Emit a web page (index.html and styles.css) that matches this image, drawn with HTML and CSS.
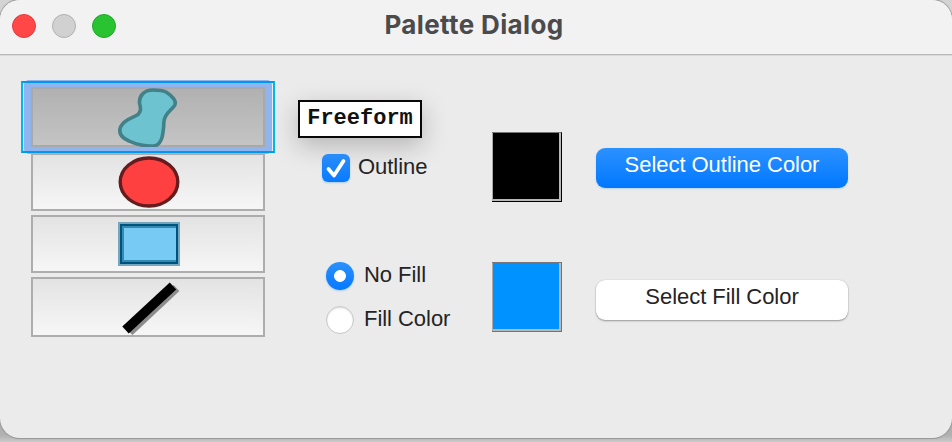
FILE: index.html
```html
<!DOCTYPE html>
<html lang="en">
<head>
<meta charset="utf-8">
<title>Palette Dialog</title>
<link rel="stylesheet" href="styles.css">
</head>
<body>
<main class="window">
  <header class="titlebar">
    <div class="lights"><span class="light close"></span><span class="light minimize"></span><span class="light zoom"></span></div>
    <h1 class="title">Palette Dialog</h1>
  </header>
  <section class="content">
    <div class="tools">
      <button class="tool selected" aria-label="Freeform">
        <svg width="62" height="60" viewBox="118 87 62 60"><path d="M153 90C144 90 139 96 139.500 103C141 109 141 111 138 114.500C133 118 124 119 120.500 127C118 134 122 138 129 141C136 144.500 149 147.500 156 145.500C163 142 163 132 163.800 125C163 116 169 112 173 107.500C179 102 172 96 166 92C162 90 157 90 153 90Z" fill="#6dc3d0" stroke="#438189" stroke-width="3.600"/></svg>
      </button>
      <button class="tool" aria-label="Ellipse">
        <svg width="62" height="54" viewBox="118 155 62 54"><ellipse cx="149" cy="182" rx="28.800" ry="24" fill="#ff4040" stroke="#651c1e" stroke-width="3.400"/></svg>
      </button>
      <button class="tool" aria-label="Rectangle">
        <svg width="62" height="54" viewBox="118 217 62 54"><path d="M118 222h62v44h-62z" fill="#76a6be"/><path d="M120 224h58v40h-58z" fill="#00537e"/><path d="M122 226h54v36h-54z" fill="#3289b2"/><path d="M124 228h52v32h-52z" fill="#77caf4"/></svg>
      </button>
      <button class="tool last" aria-label="Line">
        <svg width="62" height="56" viewBox="118 279 62 56"><path d="M129.500 332L176.500 288" stroke="#8c8c8c" stroke-width="8.500"/><path d="M125.500 330L173 286" stroke="#000" stroke-width="9.500"/></svg>
      </button>
    </div>
    <div class="options">
      <div class="tooltip">Freeform</div>
      <label class="option outline"><span class="check"><svg width="28" height="28" viewBox="0 0 28 28"><path d="M6.500 15L12 21.500L21.500 7" fill="none" stroke="#fff" stroke-width="3.700" stroke-linecap="round" stroke-linejoin="round"/></svg></span><span class="outline-text">Outline</span></label>
      <div class="radios">
        <label class="option"><span class="radio checked"></span><span class="nofill-text">No Fill</span></label>
        <label class="option"><span class="radio"></span><span class="fill-text">Fill Color</span></label>
      </div>
    </div>
    <div class="swatches"><div class="swatch black"></div><div class="swatch blue"></div></div>
    <div class="actions">
      <button class="action primary"><span class="select-outline">Select Outline Color</span></button>
      <button class="action secondary"><span class="select-fill">Select Fill Color</span></button>
    </div>
  </section>
</main>
</body>
</html>
```
FILE: styles.css
```css
* { box-sizing: border-box; }
body {
  margin: 0;
  height: 442px;
  overflow: hidden;
  background: linear-gradient(#d4d4d4, #b0b0b0 435px, #cacaca);
  font-family: "Liberation Sans", Arial, sans-serif;
  font-size: 22px;
  letter-spacing: -.04px;
  color: #242424;
}
.window {
  width: 952px;
  height: 438px;
  border-radius: 20px;
  overflow: hidden;
  background: #ebebeb;
  box-shadow: 0 0 1px 1px #969696;
}
.titlebar {
  height: 56px;
  display: grid;
  grid-template-columns: 1fr auto 1fr;
  background: #f3f2f2;
  border-bottom: 1px solid #dadada;
  box-shadow: inset 0 -1px #b9b9b9;
}
.lights { display: flex; gap: 16px; padding: 14px 0 0 12px; }
.light { width: 24px; height: 24px; border-radius: 50%; border: 1px solid; }
.close { background: #ff4747; border-color: #e33b40; }
.minimize { background: #d1d1d1; border-color: #b0b0b0; }
.zoom { background: #29c231; border-color: #22a82b; }
.title {
  margin: 9px 4px 0 0;
  font: 700 26px/32px Inter, sans-serif;
  letter-spacing: .37px;
  color: #4b4b4b;
  white-space: nowrap;
}
.content { display: flex; height: 382px; }
button { margin: 0; padding: 0; font: inherit; letter-spacing: inherit; }
.tools {
  width: 234px;
  margin: 31px 0 0 31px;
  display: flex;
  flex-direction: column;
  gap: 4px;
}
.tool {
  display: flex;
  justify-content: center;
  align-items: center;
  flex: none;
  height: 58px;
  padding-left: 2px;
  border: 2px solid #adadad;
  background: linear-gradient(#e3e3e3, #f6f6f6);
  position: relative;
}
.tool svg { display: block; flex: none; }
.selected {
  height: 60px;
  margin-bottom: 2px;
  border-color: #a9a9a9;
  background: linear-gradient(#b1b1b1, #c4c4c4);
  z-index: 1;
}
.selected::before {
  content: "";
  position: absolute;
  inset: -9px;
  border: 7px solid #8fb4ee;
  border-radius: 5px;
}
.selected::after {
  content: "";
  position: absolute;
  inset: -8px -12px;
  border: 2px solid #00b7ea;
  border-top-color: #0099ee;
  border-bottom-color: #0099ee;
}
.last { height: 60px; }
.options { width: 170px; margin-left: 33px; padding-top: 44px; }
.tooltip {
  width: 124px;
  height: 38px;
  border: 2px solid #080808;
  background: #fff;
  box-shadow: 0 8px 26px rgba(0, 0, 0, .23);
  color: #111;
  text-align: center;
  font: 700 22px/34px "Liberation Mono", monospace;
  letter-spacing: 0;
}
.option { display: flex; align-items: center; white-space: nowrap; line-height: 28px; }
.outline { margin: 16px 0 0 24px; gap: 8px; }
.check {
  width: 28px;
  height: 28px;
  border-radius: 6px;
  background: linear-gradient(#2b8df8, #087aff);
  box-shadow: 0 1px 2px #a6c9ed;
}
.check svg { display: block; }
.outline-text, .nofill-text, .fill-text { margin-top: -3px; }
.radios { display: grid; gap: 16px; margin: 80px 0 0 28px; }
.radios .option { gap: 10px; }
.radio {
  width: 28px;
  height: 28px;
  border: 1px solid #c7c7c7;
  border-radius: 50%;
  background: #fff;
  box-shadow: inset 0 1px 2px #ddd;
}
.checked {
  border: 0;
  background: radial-gradient(circle, #fff 5.5px, transparent 6.3px), linear-gradient(#2c90fc, #0579ff);
  box-shadow: 0 1px 2px #a6c9ed;
}
.swatches { margin: 76px 0 0 24px; display: grid; grid-auto-rows: 70px; gap: 60px; align-content: start; }
.swatch {
  width: 70px;
  height: 70px;
  border: solid;
  border-width: 1px 1px 1px 0;
  border-color: #777 currentColor currentColor;
  background: currentColor;
  box-shadow: inset 1px 0 #aaa, inset -2px -2px #b8b8b8;
}
.black { color: #000; }
.blue { color: #0093ff; }
.actions { width: 252px; margin: 92px 0 0 34px; display: flex; flex-direction: column; gap: 92px; }
.action {
  height: 40px;
  border: 0;
  border-radius: 9px;
  line-height: 34px;
  text-align: center;
  display: flex;
  justify-content: center;
  align-items: flex-start;
  white-space: nowrap;
}
.primary {
  color: #fff;
  background: linear-gradient(#2c91ff, #0078ff);
  box-shadow: 0 1px 2px #b8d3ee;
}
.secondary {
  color: #242424;
  background: #fff;
  box-shadow: 0 1px 2px rgba(0, 0, 0, .35), 0 0 1px rgba(0, 0, 0, .2);
}
```
